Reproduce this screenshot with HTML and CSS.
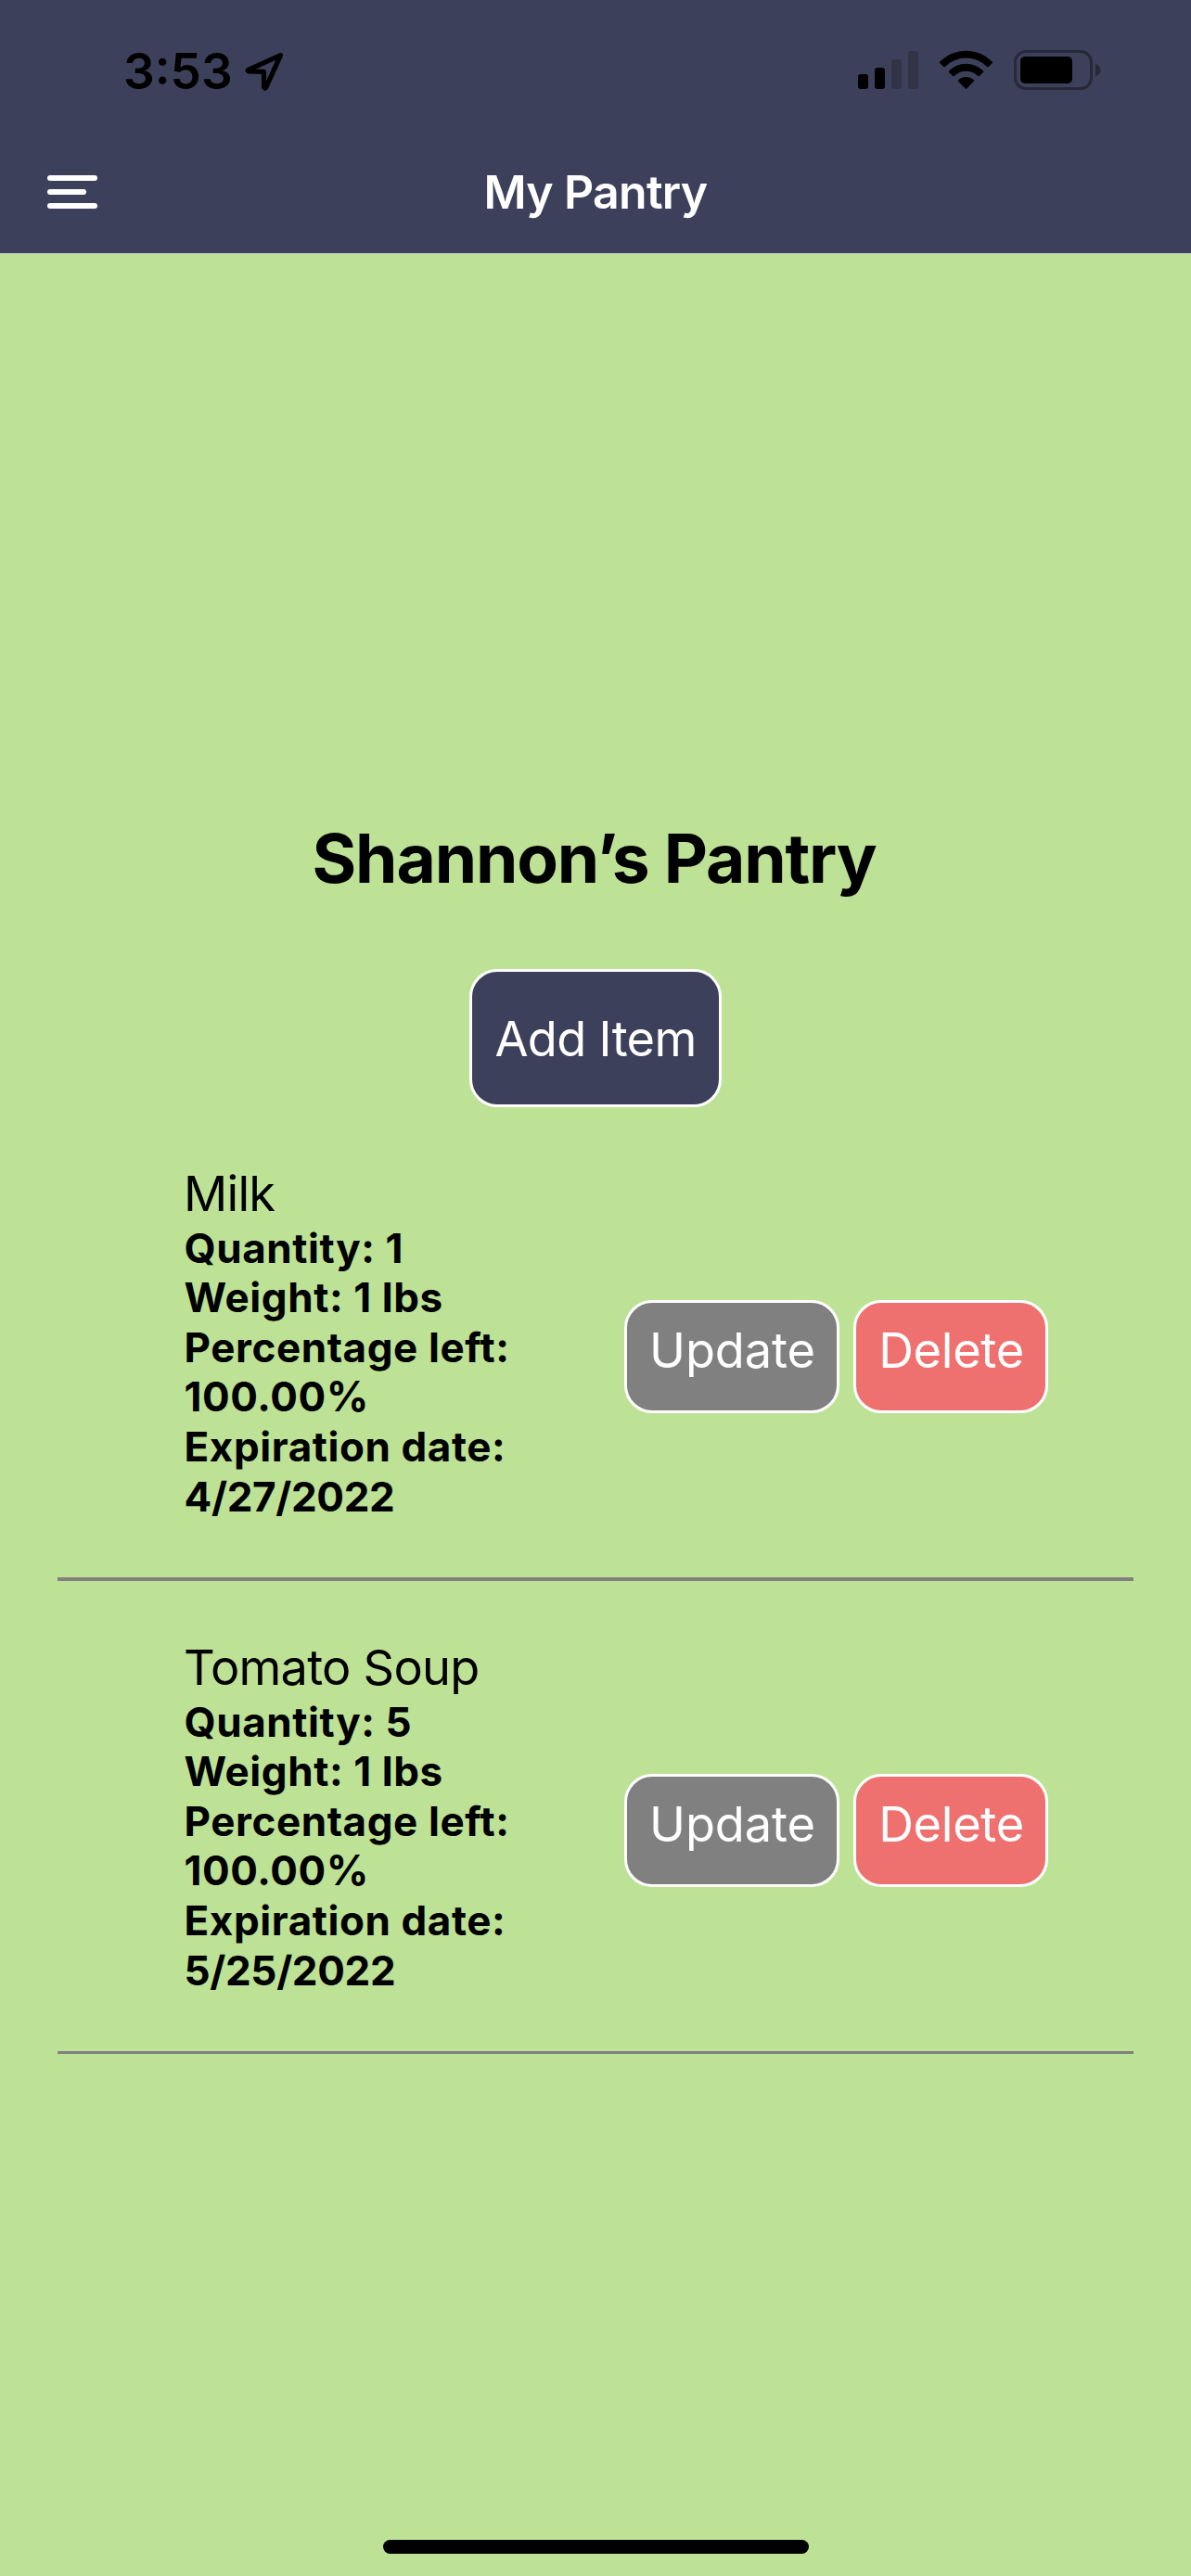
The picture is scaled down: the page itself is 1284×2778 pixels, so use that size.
FILE: index.html
```
<!DOCTYPE html>
<html lang="en">
<head>
<meta charset="utf-8">
<title>My Pantry</title>
<link rel="stylesheet" href="styles.css">
</head>
<body>
<header class="header">
  <div class="status">
    <div class="status-left">
      <span class="time">3:53</span>
      <svg class="location" width="46" height="46" viewBox="0 0 46 46"><path d="M5.6 21.3 L40.5 5.6 L24.7 40.4 Q23.6 41.8 22.6 40.2 L22.5 23.4 L5.6 22.9 Q4.4 22.1 5.6 21.3 Z" fill="none" stroke="#000" stroke-width="5.2" stroke-linejoin="round"/></svg>
    </div>
    <div class="status-right">
      <svg width="65" height="41" viewBox="0 0 65 41"><g fill="#000"><rect x="0" y="25" width="11" height="16" rx="3"/><rect x="18" y="18" width="11" height="23" rx="3"/></g><g fill="#313346"><rect x="36" y="9" width="11" height="32" rx="3"/><rect x="54" y="0" width="11" height="41" rx="3"/></g></svg>
      <svg class="wifi" width="59" height="43" viewBox="0 0 59 43"><path d="M1.3 12.4 A40 40 0 0 1 57.7 12.4 Q58.5 13.2 57.7 14 L53.8 17.9 Q53 18.7 52.2 17.9 A32 32 0 0 0 6.8 17.9 Q6 18.7 5.2 17.9 L1.3 14 Q.5 13.2 1.3 12.4 Z M11.2 22.3 A26 26 0 0 1 47.8 22.3 Q48.6 23.1 47.8 23.9 L43.9 27.9 Q43.1 28.7 42.3 27.9 A18.5 18.5 0 0 0 16.7 27.9 Q15.9 28.7 15.1 27.9 L11.2 23.9 Q10.4 23.1 11.2 22.3 Z M21.2 32.2 A12.5 12.5 0 0 1 37.8 32.2 Q38.6 33 37.8 33.8 L30.3 41.4 Q29.5 42.2 28.7 41.4 L21.2 33.8 Q20.4 33 21.2 32.2 Z" fill="#000"/></svg>
      <svg class="battery" width="94" height="43" viewBox="0 0 94 43"><rect x="1.5" y="1.5" width="82" height="40" rx="11.5" fill="none" stroke="#272838" stroke-width="3"/><rect x="7" y="7" width="56" height="29" rx="5" fill="#000"/><path d="M88 14.5 Q93.5 17 93.5 21.5 Q93.5 26 88 28.5 Z" fill="#272838"/></svg>
    </div>
  </div>
  <nav class="navbar">
    <div class="menu"><i></i><i class="short"></i><i></i></div>
    <div class="nav-title">My Pantry</div>
  </nav>
</header>
<main class="main">
  <h1 class="heading">Shannon’s Pantry</h1>
  <button class="btn add">Add Item</button>
  <section class="list">
    <article class="item">
      <div class="info">
        <div class="name">Milk</div>
        <div class="detail">Quantity: 1</div>
        <div class="detail">Weight: 1 lbs</div>
        <div class="detail">Percentage left:</div>
        <div class="detail">100.00<span class="percent">%</span></div>
        <div class="detail">Expiration date:</div>
        <div class="detail date">4/27/2022</div>
      </div>
      <div class="actions">
        <button class="btn update">Update</button>
        <button class="btn delete">Delete</button>
      </div>
    </article>
    <article class="item last">
      <div class="info">
        <div class="name">Tomato Soup</div>
        <div class="detail">Quantity: 5</div>
        <div class="detail">Weight: 1 lbs</div>
        <div class="detail">Percentage left:</div>
        <div class="detail">100.00<span class="percent">%</span></div>
        <div class="detail">Expiration date:</div>
        <div class="detail date">5/25/2022</div>
      </div>
      <div class="actions">
        <button class="btn update">Update</button>
        <button class="btn delete">Delete</button>
      </div>
    </article>
  </section>
</main>
<footer class="home"><div class="home-bar"></div></footer>
</body>
</html>
```
FILE: styles.css
```
* { box-sizing: border-box; }

body {
  margin: 0;
  width: 1284px;
  height: 2778px;
  display: flex;
  flex-direction: column;
  overflow: hidden;
  background: #bde296;
  color: #000;
  font-family: Inter, "Liberation Sans", sans-serif;
}

svg { display: block; flex: none; }

.header {
  height: 274px;
  flex: none;
  background: #3d405b;
  border-bottom: 1px solid #c9cfc4;
}

.status {
  height: 141px;
  padding: 48px 97px 0 133px;
  display: flex;
  justify-content: space-between;
  align-items: flex-start;
}

.status-left, .status-right { display: flex; }

.time {
  width: 119px;
  font-size: 53px;
  line-height: 59px;
  font-weight: 600;
  letter-spacing: 0;
}

.location { margin: 6px 0 0 10px; }

.status-right { padding-top: 6px; }
.status-right svg:first-child { margin-top: 1px; }
.wifi { margin-left: 22px; }
.battery { margin-left: 22px; }

.navbar {
  height: 132px;
  padding: 0 51px;
  display: grid;
  grid-template-columns: 1fr auto 1fr;
  align-items: center;
}

.menu { display: grid; gap: 9px; }
.menu i { width: 54px; height: 6px; border-radius: 3px; background: #fff; }
.menu .short { width: 42px; }

.nav-title {
  color: #fff;
  font-size: 50px;
  line-height: 60px;
  font-weight: 600;
  letter-spacing: -0.7px;
}

.main {
  flex: 1;
  padding-top: 607px;
  display: flex;
  flex-direction: column;
  align-items: center;
}

.heading {
  margin: 0 3px 0 0;
  font-size: 73px;
  line-height: 90px;
  font-weight: 700;
  letter-spacing: -1.15px;
}

.btn {
  font-family: inherit;
  font-size: 52.3px;
  line-height: 64px;
  font-weight: 400;
  color: #fff;
  border: 3px solid #fff;
  border-radius: 30px;
  padding: 0;
  white-space: nowrap;
}

.add {
  width: 272px;
  height: 149px;
  margin-top: 74px;
  background: #3d405b;
  letter-spacing: -0.68px;
}

.list { width: 1160px; }

.item {
  height: 511px;
  padding: 61px 92px 0 136px;
  border-bottom: 4px solid #808080;
  display: flex;
  justify-content: space-between;
  align-items: flex-start;
}

.item.last { height: 510px; border-bottom-width: 3px; }

.name {
  font-size: 52.3px;
  line-height: 64px;
  font-weight: 400;
  letter-spacing: -0.75px;
  margin-bottom: 0.6px;
}

.detail {
  font-size: 44px;
  line-height: 53.6px;
  font-weight: 700;
  letter-spacing: 0.58px;
  padding-left: 0.5px;
}

.date { letter-spacing: -0.35px; }
.percent { font-weight: 700; font-size: 45px; line-height: 1; }

.actions { display: flex; gap: 15px; padding-top: 147px; }

.actions .btn {
  height: 122px;
  padding: 0 0 15px 1px;
}

.update { width: 232px; background: #808080; letter-spacing: -0.1px; }
.delete { width: 210px; background: #ee7170; letter-spacing: -0.3px; }

.home {
  flex: none;
  height: 39px;
  display: flex;
  justify-content: center;
}

.home-bar {
  width: 459px;
  height: 15px;
  border-radius: 7.5px;
  background: #000;
}
```
